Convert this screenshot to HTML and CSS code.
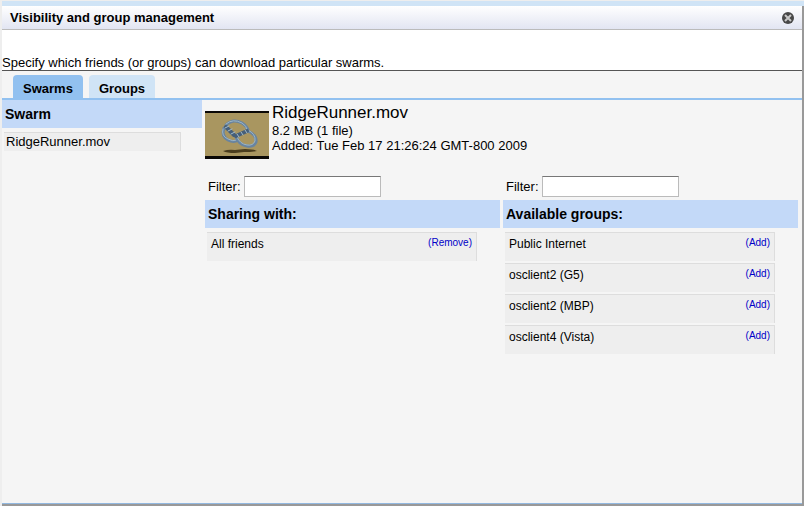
FILE: index.html
```html
<!DOCTYPE html>
<html lang="en">
<head>
<meta charset="utf-8">
<title>Visibility and group management</title>
<link rel="stylesheet" href="styles.css">
</head>
<body>
<section class="dialog" aria-labelledby="dialog-title">
  <header class="titlebar">
    <h1 id="dialog-title">Visibility and group management</h1>
    <button class="close" type="button" aria-label="Close">
      <svg width="12" height="12" viewBox="0 0 12 12" aria-hidden="true">
        <circle cx="6" cy="6" r="6" fill="#484848"/>
        <path d="M3 3 9 9M9 3 3 9" stroke="#c8c8c8" stroke-width="2"/>
      </svg>
    </button>
  </header>
  <p class="intro">Specify which friends (or groups) can download particular swarms.</p>
  <nav class="tabs">
    <button class="tab active" type="button">Swarms</button>
    <button class="tab" type="button">Groups</button>
  </nav>
  <main class="content">
    <aside class="sidebar">
      <h2 class="heading">Swarm</h2>
      <ul class="list">
        <li class="row swarm">RidgeRunner.mov</li>
      </ul>
    </aside>
    <div class="details">
      <div class="summary">
        <svg class="thumb" width="64" height="48" viewBox="0 0 64 48" role="img" aria-label="RidgeRunner.mov preview">
          <rect width="64" height="48" fill="#0a0806"/>
          <rect y="2" width="64" height="43" fill="#a99660"/>
          <path d="M18 40q6-2 12-1l10-1q8 0 12 2-7 1-13 1l-9 1q-8 0-12-2z" fill="#4a3d1e"/>
          <g fill="none" stroke-linecap="round">
            <path d="M21 14Q28 7 37 12Q43 16 43 20M19 17Q16 25 23 29Q29 32 33 29" stroke="#6884a0" stroke-width="3"/>
            <path d="M21 13Q28 7 37 12Q42 15 42 19M18 18Q16 25 23 28Q28 31 32 29" stroke="#9db6c6" stroke-width="1"/>
            <path d="M43 20Q52 24 51 31Q49 36 42 35Q34 34 31 26" stroke="#6884a0" stroke-width="3"/>
            <path d="M43 19Q51 23 50 30Q48 35 42 34Q35 33 32 26" stroke="#9db6c6" stroke-width="1"/>
            <path d="M21 16 29 24M31 25 42 20" stroke="#465f79" stroke-width="4"/>
            <path d="M20 17 24 15M23 20 27 18M26 23 30 21M32 23 34 26M36 21 38 24M40 19 42 22" stroke="#a3bccb" stroke-width="1"/>
          </g>
        </svg>
        <div>
          <h2 class="name">RidgeRunner.mov</h2>
          <p>8.2 MB (1 file)</p>
          <p>Added: Tue Feb 17 21:26:24 GMT-800 2009</p>
        </div>
      </div>
      <div class="columns">
        <section>
          <div class="filter"><label for="filter-sharing">Filter:</label><input id="filter-sharing" type="text"></div>
          <h2 class="heading">Sharing with:</h2>
          <ul class="list">
            <li class="row">All friends <a href="#">(Remove)</a></li>
          </ul>
        </section>
        <section>
          <div class="filter"><label for="filter-groups">Filter:</label><input id="filter-groups" type="text"></div>
          <h2 class="heading">Available groups:</h2>
          <ul class="list">
            <li class="row">Public Internet <a href="#">(Add)</a></li>
            <li class="row">osclient2 (G5) <a href="#">(Add)</a></li>
            <li class="row">osclient2 (MBP) <a href="#">(Add)</a></li>
            <li class="row">osclient4 (Vista) <a href="#">(Add)</a></li>
          </ul>
        </section>
      </div>
    </div>
  </main>
</section>
</body>
</html>
```
FILE: styles.css
```css
* {
  box-sizing: border-box;
}

body {
  margin: 0;
  padding: 1px 0 0 2px;
  background: #eee;
  color: #000;
  font: 13px/15px "Liberation Sans", Arial, sans-serif;
}

h1, h2, p, ul {
  margin: 0;
  padding: 0;
}

ul {
  list-style: none;
}

.dialog {
  display: flex;
  flex-direction: column;
  min-height: calc(100vh - 1px);
  background: linear-gradient(#999, #999) right / 2px 100% no-repeat #f5f5f5;
  border-top: 5px solid #d0e4f6;
  border-bottom: 2px solid #999;
  padding-right: 2px;
}

.titlebar {
  display: flex;
  align-items: center;
  justify-content: space-between;
  height: 24px;
  padding: 0 8px;
  background: linear-gradient(#fff, #e2e5f2);
  border-bottom: 1px solid #bbb;
}

h1 {
  font-size: 13px;
}

.close {
  display: flex;
  padding: 0;
  border: 0;
  background: none;
}

.intro {
  padding: 25px 0 0;
  background: #fff;
  border-bottom: 1px solid #555;
}

.tabs {
  display: flex;
  gap: 6px;
  padding: 4px 11px 0;
  border-bottom: 2px solid #92c1f0;
}

.tab {
  height: 23px;
  padding: 4px 10px 0;
  border: 0;
  border-radius: 4px 4px 0 0;
  background: #d0e4f6;
  color: #000;
  font: bold 13px/15px "Liberation Sans", Arial, sans-serif;
}

.tab.active {
  background: #92c1f0;
}

.content {
  display: grid;
  flex: 1;
  grid-template-columns: 1fr 3fr;
  border-bottom: 1px solid #92b8e0;
}

.heading {
  padding: 7px 3px 6px;
  background: #c3d9f8;
  font-size: 14px;
  line-height: 15px;
}

.list {
  display: grid;
  gap: 2px;
  padding: 4px 23px 0 2px;
}

.row {
  display: flex;
  justify-content: space-between;
  height: 29px;
  padding: 4px 4px 3px;
  background: #eee;
  border-top: 1px solid #ddd;
  border-right: 1px solid #ddd;
  font-size: 12px;
}

.row.swarm {
  height: 19px;
  padding: 1px 2px;
  font-size: 13px;
}

.row a {
  color: #0000c8;
  font-size: 10px;
  line-height: 12px;
  text-decoration: none;
}

.sidebar .list {
  padding-right: 21px;
}

.details {
  padding: 3px 4px 3px 3px;
}

.summary {
  display: flex;
  gap: 3px;
}

.thumb {
  flex: none;
  margin-top: 8px;
}

.name {
  font-size: 17px;
  font-weight: normal;
  line-height: 20px;
}

.columns {
  display: grid;
  grid-template-columns: 1fr 1fr;
  gap: 3px;
  margin-top: 17px;
}

.filter {
  display: flex;
  align-items: center;
  gap: 3px;
  padding: 0 3px 3px;
}

.filter input {
  width: 137px;
  height: 21px;
  padding: 0 3px;
  border: 1px solid #bbb;
  border-top: 1px solid #777;
  background: #fff;
  font: inherit;
}
```
